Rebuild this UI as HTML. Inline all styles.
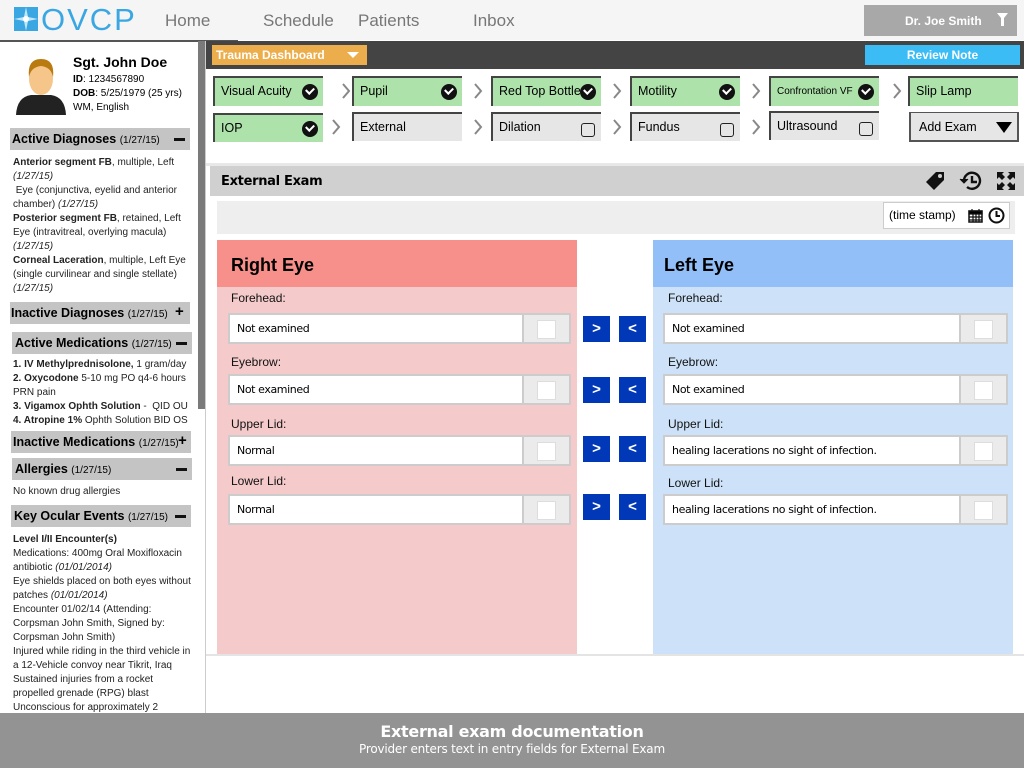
<!DOCTYPE html>
<html><head><meta charset="utf-8"><style>
*{margin:0;padding:0;box-sizing:border-box}
body{width:1024px;height:768px;position:relative;overflow:hidden;background:#fff;font-family:"Liberation Sans",sans-serif;color:#000}
.a{position:absolute}
.nav{font-size:17px;color:#777;top:11px}
.sh{position:absolute;left:10px;width:180px;height:22px;background:#c4c4c4;font-size:12.5px;font-weight:bold;padding:4px 0 0 2px;white-space:nowrap}
.sh small{font-weight:normal;font-size:10px}
.sh b{position:absolute;right:5px;top:4px;width:11px;height:14px}
.sh b.m:after{content:"";position:absolute;left:0;top:6px;width:11px;height:3px;background:#111}
.sh b.p:after{content:"+";position:absolute;left:1px;top:-3px;font-size:15px}
.st{position:absolute;left:13px;width:182px;font-size:10px;line-height:14px;color:#222}
.tab{position:absolute;width:110px;height:30px;border-top:2px solid #444;border-left:2px solid #444;font-size:12.5px;padding:6px 0 0 6px}
.g{background:#ade3ab}.e{background:#e6e6e6}
.ck{position:absolute;right:5px;top:6px;width:16px;height:16px;border-radius:50%;background:#111}
.ck:after{content:"";position:absolute;left:4px;top:3px;width:6px;height:4px;border-left:2px solid #fff;border-bottom:2px solid #fff;transform:rotate(-45deg)}
.bx{position:absolute;right:6px;top:9px;width:14px;height:14px;border:1.5px solid #222;border-radius:3px}
.chev{position:absolute;width:10px;height:18px}
.lbl{position:absolute;font-size:12px;color:#111}
.fld{position:absolute;height:31px;border:2px solid #ccc;background:#fff;font-size:11px;padding:7px 0 0 7px;font-family:"DejaVu Sans",sans-serif;letter-spacing:-.4px}
.fld i{position:absolute;right:0;top:0;width:47px;height:27px;background:#ebebeb;border-left:2px solid #ccc}
.fld i:after{content:"";position:absolute;left:13px;top:5px;width:17px;height:17px;background:#fff;border:1px solid #ddd}
.btn{position:absolute;width:27px;height:26px;background:#0038b8;color:#fff;font-weight:bold;font-size:15px;text-align:center;line-height:26px}
</style></head><body>
<div class="a" style="left:0;top:0;width:1024px;height:40px;background:#f5f5f5"></div>
<svg class="a" style="left:14px;top:7px" width="24" height="24"><rect width="24" height="24" fill="#3aa7e3"/><path d="M12 0L14 10 24 12 14 14 12 24 10 14 0 12 10 10Z" fill="#bfe6fb"/><circle cx="12" cy="12" r="3" fill="#fff"/></svg>
<div class="a" style="left:41px;top:2px;font-size:31px;color:#3aa7e3;letter-spacing:2px">OVCP</div>
<div class="a nav" style="left:165px">Home</div>
<div class="a nav" style="left:263px">Schedule</div>
<div class="a nav" style="left:358px">Patients</div>
<div class="a nav" style="left:473px">Inbox</div>
<div class="a" style="left:864px;top:5px;width:153px;height:31px;background:#a8a8a8;color:#fff;font-size:12px;font-weight:bold;padding:9px 0 0 41px">Dr. Joe Smith<svg style="position:absolute;right:9px;top:8px" width="11" height="13"><path d="M0 0H11L7 5V13H4V5Z" fill="#fff"/></svg></div>
<div class="a" style="left:0;top:40px;width:238px;height:2px;background:#555"></div>
<div class="a" style="left:198px;top:41px;width:7px;height:368px;background:#7a7a7a"></div>
<div class="a" style="left:205px;top:41px;width:1px;height:672px;background:#ccc"></div>
<svg class="a" style="left:14px;top:55px" width="54" height="60"><path d="M2 60Q3 42 17 40L37 40Q51 42 52 60Z" fill="#222"/><ellipse cx="27" cy="24" rx="12" ry="16" fill="#f5c58a"/><path d="M15 22Q13 4 27 4Q41 4 39 22Q37 12 27 11Q17 12 15 22Z" fill="#b97a10"/></svg>
<div class="a" style="left:73px;top:54px;font-size:14px;font-weight:bold">Sgt. John Doe</div>
<div class="a" style="left:73px;top:73px;font-size:10px;line-height:14px"><b>ID</b>: 1234567890<br><b>DOB</b>: 5/25/1979 (25 yrs)<br>WM, English</div>
<div class="sh" style="top:128px">Active Diagnoses <small>(1/27/15)</small><b class="m"></b></div>
<div class="st" style="top:156px"><b>Anterior segment FB</b>, multiple, Left <i>(1/27/15)</i><br>&nbsp;Eye (conjunctiva, eyelid and anterior chamber) <i>(1/27/15)</i><br><b>Posterior segment FB</b>, retained, Left Eye (intravitreal, overlying macula) <i>(1/27/15)</i><br><b>Corneal Laceration</b>, multiple, Left Eye (single curvilinear and single stellate) <i>(1/27/15)</i></div>
<div class="sh" style="top:302px;padding-left:1px">Inactive Diagnoses <small>(1/27/15)</small><b class="p"></b></div>
<div class="sh" style="top:332px;left:12px;padding-left:3px">Active Medications <small>(1/27/15)</small><b class="m"></b></div>
<div class="st" style="top:358px"><b>1. IV Methylprednisolone,</b> 1 gram/day<br><b>2. Oxycodone</b> 5-10 mg PO q4-6 hours PRN pain<br><b>3. Vigamox Ophth Solution</b> -&nbsp; QID OU<br><b>4. Atropine 1%</b> Ophth Solution BID OS</div>
<div class="sh" style="top:431px;left:11px">Inactive Medications <small>(1/27/15)</small><b class="p" style="right:3px"></b></div>
<div class="sh" style="top:458px;left:12px;padding-left:3px">Allergies <small>(1/27/15)</small><b class="m"></b></div>
<div class="st" style="top:485px">No known drug allergies</div>
<div class="sh" style="top:505px;left:11px;padding-left:3px">Key Ocular Events <small>(1/27/15)</small><b class="m"></b></div>
<div class="st" style="top:533px;width:180px"><b>Level I/II Encounter(s)</b><br>Medications: 400mg Oral Moxifloxacin antibiotic <i>(01/01/2014)</i><br>Eye shields placed on both eyes without patches <i>(01/01/2014)</i><br>Encounter 01/02/14 (Attending: Corpsman John Smith, Signed by: Corpsman John Smith)<br>Injured while riding in the third vehicle in a 12-Vehicle convoy near Tikrit, Iraq<br>Sustained injuries from a rocket propelled grenade (RPG) blast<br>Unconscious for approximately 2</div>
<div class="a" style="left:206px;top:41px;width:818px;height:28px;background:#444"></div>
<div class="a" style="left:212px;top:45px;width:155px;height:20px;background:#ecae4c;color:#fff;font-size:12px;font-weight:bold;padding:3px 0 0 4px">Trauma Dashboard<span style="position:absolute;right:8px;top:7px;border-left:6px solid transparent;border-right:6px solid transparent;border-top:6px solid #fff"></span></div>
<div class="a" style="left:865px;top:45px;width:155px;height:20px;background:#3bbcf5;color:#fff;font-size:12px;font-weight:bold;text-align:center;padding-top:3px">Review Note</div>
<svg width="0" height="0" style="position:absolute"><defs><symbol id="cv" viewBox="0 0 10 18"><path d="M2 2L8 9 2 16" fill="none" stroke="#888" stroke-width="2"/></symbol></defs></svg>
<div class="tab g" style="left:213px;top:76px">Visual Acuity<span class="ck"></span></div>
<svg class="chev" style="left:341px;top:82px"><use href="#cv"/></svg>
<div class="tab g" style="left:352px;top:76px">Pupil<span class="ck"></span></div>
<svg class="chev" style="left:473px;top:82px"><use href="#cv"/></svg>
<div class="tab g" style="left:491px;top:76px">Red Top Bottle<span class="ck"></span></div>
<svg class="chev" style="left:612px;top:82px"><use href="#cv"/></svg>
<div class="tab g" style="left:630px;top:76px">Motility<span class="ck"></span></div>
<svg class="chev" style="left:751px;top:82px"><use href="#cv"/></svg>
<div class="tab g" style="left:769px;top:76px;font-size:10px;padding-top:8px">Confrontation VF<span class="ck"></span></div>
<svg class="chev" style="left:892px;top:82px"><use href="#cv"/></svg>
<div class="tab g" style="left:908px;top:76px">Slip Lamp</div>
<div class="tab g" style="left:213px;top:113px;height:29px">IOP<span class="ck"></span></div>
<svg class="chev" style="left:331px;top:118px"><use href="#cv"/></svg>
<div class="tab e" style="left:352px;top:112px;height:29px">External</div>
<svg class="chev" style="left:473px;top:118px"><use href="#cv"/></svg>
<div class="tab e" style="left:491px;top:112px;height:29px">Dilation<span class="bx"></span></div>
<svg class="chev" style="left:612px;top:118px"><use href="#cv"/></svg>
<div class="tab e" style="left:630px;top:112px;height:29px">Fundus<span class="bx"></span></div>
<svg class="chev" style="left:751px;top:118px"><use href="#cv"/></svg>
<div class="tab e" style="left:769px;top:111px;height:29px">Ultrasound<span class="bx"></span></div>
<div class="a" style="left:909px;top:112px;width:110px;height:30px;background:#e6e6e6;border:2px solid #555;border-top-width:1px;font-size:12.5px;padding:7px 0 0 8px">Add Exam<span style="position:absolute;right:5px;top:9px;border-left:8px solid transparent;border-right:8px solid transparent;border-top:11px solid #000"></span></div>
<div class="a" style="left:206px;top:163px;width:818px;height:3px;background:#e8e8e8"></div>
<div class="a" style="left:210px;top:166px;width:814px;height:30px;background:#d0d0d0;font-size:13px;font-weight:bold;padding:8px 0 0 11px;font-family:'DejaVu Sans',sans-serif;letter-spacing:-.3px">External Exam</div>
<svg class="a" style="left:924px;top:170px" width="22" height="22"><path d="M2 12L12 2 20 2 20 10 10 20Z" fill="#111"/><circle cx="16" cy="6" r="2" fill="#d0d0d0"/></svg>
<svg class="a" style="left:959px;top:170px" width="24" height="22" fill="none" stroke="#111" stroke-width="2.4"><path d="M5 11A8 8 0 1 1 8 17"/><path d="M1 9L5 13 9 9" fill="#111" stroke-width="1"/><path d="M13 6V12H18"/></svg>
<svg class="a" style="left:996px;top:171px" width="20" height="20" fill="#111"><path d="M1 1H8L6 3 9 6 6 9 3 6 1 8Z"/><path d="M19 1V8L17 6 14 9 11 6 14 3 12 1Z"/><path d="M1 19V12L3 14 6 11 9 14 6 17 8 19Z"/><path d="M19 19H12L14 17 11 14 14 11 17 14 19 12Z"/></svg>
<div class="a" style="left:217px;top:201px;width:798px;height:33px;background:#eee"></div>
<div class="a" style="left:883px;top:202px;width:127px;height:27px;background:#fff;border:1px solid #ccc;font-size:12px;padding:5px 0 0 5px">(time stamp)
<svg style="position:absolute;left:84px;top:5px" width="15" height="15"><rect x="1" y="3" width="13" height="11" fill="none" stroke="#111" stroke-width="1.5"/><path d="M1 3H14V6H1Z M4 1V4M11 1V4M1 9H14M1 12H14M5 6V14M8 6V14M11 6V14" stroke="#111" stroke-width="1.2"/></svg>
<svg style="position:absolute;left:104px;top:4px" width="17" height="17" fill="none" stroke="#111" stroke-width="2"><circle cx="8.5" cy="8.5" r="7"/><path d="M8.5 4V9H12"/></svg></div>
<div class="a" style="left:217px;top:240px;width:360px;height:414px;background:#f4cacb"></div>
<div class="a" style="left:217px;top:240px;width:360px;height:47px;background:#f7908a;font-size:18px;font-weight:bold;padding:15px 0 0 14px">Right Eye</div>
<div class="a" style="left:653px;top:240px;width:360px;height:414px;background:#cde2f8"></div>
<div class="a" style="left:653px;top:240px;width:360px;height:47px;background:#92bff8;font-size:18px;font-weight:bold;padding:15px 0 0 11px">Left Eye</div>
<div class="a" style="left:206px;top:654px;width:818px;height:2px;background:#e4e4e4"></div>
<div class="lbl" style="left:231px;top:291px">Forehead:</div>
<div class="fld" style="left:228px;top:313px;width:343px">Not examined<i></i></div>
<div class="lbl" style="left:231px;top:355px">Eyebrow:</div>
<div class="fld" style="left:228px;top:374px;width:343px">Not examined<i></i></div>
<div class="lbl" style="left:231px;top:417px">Upper Lid:</div>
<div class="fld" style="left:228px;top:435px;width:343px">Normal<i></i></div>
<div class="lbl" style="left:231px;top:474px">Lower Lid:</div>
<div class="fld" style="left:228px;top:494px;width:343px">Normal<i></i></div>
<div class="lbl" style="left:668px;top:291px">Forehead:</div>
<div class="fld" style="left:663px;top:313px;width:345px">Not examined<i></i></div>
<div class="lbl" style="left:668px;top:355px">Eyebrow:</div>
<div class="fld" style="left:663px;top:374px;width:345px">Not examined<i></i></div>
<div class="lbl" style="left:668px;top:417px">Upper Lid:</div>
<div class="fld" style="left:663px;top:435px;width:345px">healing lacerations no sight of infection.<i></i></div>
<div class="lbl" style="left:668px;top:476px">Lower Lid:</div>
<div class="fld" style="left:663px;top:494px;width:345px">healing lacerations no sight of infection.<i></i></div>
<div class="btn" style="left:583px;top:316px">&gt;</div><div class="btn" style="left:619px;top:316px">&lt;</div>
<div class="btn" style="left:583px;top:377px">&gt;</div><div class="btn" style="left:619px;top:377px">&lt;</div>
<div class="btn" style="left:583px;top:436px">&gt;</div><div class="btn" style="left:619px;top:436px">&lt;</div>
<div class="btn" style="left:583px;top:494px">&gt;</div><div class="btn" style="left:619px;top:494px">&lt;</div>
<div class="a" style="left:0;top:713px;width:1024px;height:55px;background:#939393;color:#fff;text-align:center;font-family:'DejaVu Sans',sans-serif">
<div style="font-size:16px;font-weight:bold;margin-top:9px;letter-spacing:-.3px">External exam documentation</div>
<div style="font-size:12px;margin-top:1px;letter-spacing:-.2px">Provider enters text in entry fields for External Exam</div></div>
</body></html>
